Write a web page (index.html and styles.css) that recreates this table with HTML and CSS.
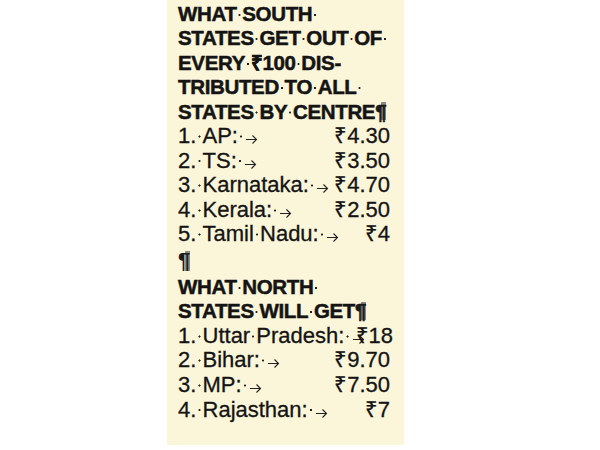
FILE: index.html
```html
<!DOCTYPE html>
<html lang="en">
<head>
    <meta charset="UTF-8">
    <title>South vs North share</title>
    <link rel="stylesheet" href="styles.css">
</head>
<body>
    <div class="clip">
        <h1 class="head">
            WHAT<span class="sp"></span>SOUTH<span class="sp"></span><br>
            STATES<span class="sp"></span>GET<span class="sp"></span>OUT<span class="sp"></span>OF<span class="sp"></span><br>
            EVERY<span class="sp"></span>₹100<span class="sp"></span>DIS-<br>
            TRIBUTED<span class="sp"></span>TO<span class="sp"></span>ALL<span class="sp"></span><br>
            STATES<span class="sp"></span>BY<span class="sp"></span>CENTRE<span class="pil">¶</span>
        </h1>
        <ul class="list">
            <li class="row"><span>1.<span class="sp"></span>AP:<span class="sp"></span><svg class="tab" viewBox="0 0 12 10"><path d="M0 5.5H10.5M6.5 1.5L10.5 5.5L6.5 9.5"/></svg></span><span>₹4.30</span></li>
            <li class="row"><span>2.<span class="sp"></span>TS:<span class="sp"></span><svg class="tab" viewBox="0 0 12 10"><path d="M0 5.5H10.5M6.5 1.5L10.5 5.5L6.5 9.5"/></svg></span><span>₹3.50</span></li>
            <li class="row"><span>3.<span class="sp"></span>Karnataka:<span class="sp"></span><svg class="tab" viewBox="0 0 12 10"><path d="M0 5.5H10.5M6.5 1.5L10.5 5.5L6.5 9.5"/></svg></span><span>₹4.70</span></li>
            <li class="row"><span>4.<span class="sp"></span>Kerala:<span class="sp"></span><svg class="tab" viewBox="0 0 12 10"><path d="M0 5.5H10.5M6.5 1.5L10.5 5.5L6.5 9.5"/></svg></span><span>₹2.50</span></li>
            <li class="row"><span>5.<span class="sp"></span>Tamil<span class="sp"></span>Nadu:<span class="sp"></span><svg class="tab" viewBox="0 0 12 10"><path d="M0 5.5H10.5M6.5 1.5L10.5 5.5L6.5 9.5"/></svg></span><span>₹4</span></li>
        </ul>
        <p class="blank"><span class="pil">¶</span></p>
        <h1 class="head">
            WHAT<span class="sp"></span>NORTH<span class="sp"></span><br>
            STATES<span class="sp"></span>WILL<span class="sp"></span>GET<span class="pil">¶</span>
        </h1>
        <ul class="list">
            <li class="row tight"><span>1.<span class="sp"></span>Uttar<span class="sp"></span>Pradesh:<span class="sp"></span><svg class="tab" viewBox="0 0 12 10"><path d="M0 5.5H10.5M6.5 1.5L10.5 5.5L6.5 9.5"/></svg></span><span>₹18</span></li>
            <li class="row"><span>2.<span class="sp"></span>Bihar:<span class="sp"></span><svg class="tab" viewBox="0 0 12 10"><path d="M0 5.5H10.5M6.5 1.5L10.5 5.5L6.5 9.5"/></svg></span><span>₹9.70</span></li>
            <li class="row"><span>3.<span class="sp"></span>MP:<span class="sp"></span><svg class="tab" viewBox="0 0 12 10"><path d="M0 5.5H10.5M6.5 1.5L10.5 5.5L6.5 9.5"/></svg></span><span>₹7.50</span></li>
            <li class="row"><span>4.<span class="sp"></span>Rajasthan:<span class="sp"></span><svg class="tab" viewBox="0 0 12 10"><path d="M0 5.5H10.5M6.5 1.5L10.5 5.5L6.5 9.5"/></svg></span><span>₹7</span></li>
        </ul>
    </div>
</body>
</html>
```

FILE: styles.css
```css
body {
    margin: 0;
    background-color: #ffffff;
    font-family: "Liberation Sans", Arial, sans-serif;
    color: #141414;
}
.clip {
    width: 212px;
    height: 443px;
    margin-left: 167px;
    padding: 2px 14px 0 11px;
    background-color: #fbf5d9; /* newsprint cream */
}
.head {
    margin: 0;
    font-size: 20.5px;
    font-weight: bold;
    line-height: 24.4px;
    letter-spacing: -0.35px;
    -webkit-text-stroke: 0.5px #141414;
}
.list {
    list-style: none;
    margin: 0;
    padding: 0;
    font-size: 22px;
    line-height: 24.6px;
    -webkit-text-stroke: 0.3px #141414;
}
.row {
    display: flex;
    justify-content: space-between;
    white-space: nowrap;
}
.blank {
    margin: 0;
    font-size: 22px;
    line-height: 28px;
    height: 28px;
}
.sp {
    display: inline-block;
    width: 0.28em;
    height: 0.6em;
    background: radial-gradient(circle, #222 0 0.8px, transparent 1.3px);
}
.tab {
    width: 12px;
    height: 10px;
    margin-left: 2px;
    vertical-align: -1px;
    fill: none;
    stroke: #222;
    stroke-width: 1.1;
}
.tight .tab {
    margin-right: -9px;
}
.pil {
    font-weight: bold;
    color: #1c1c1c;
    background: linear-gradient(to right, transparent 55%, #8d8c84 55%);
    background-size: 100% 80%;
    background-repeat: no-repeat;
    background-position: 0 60%;
}
```
